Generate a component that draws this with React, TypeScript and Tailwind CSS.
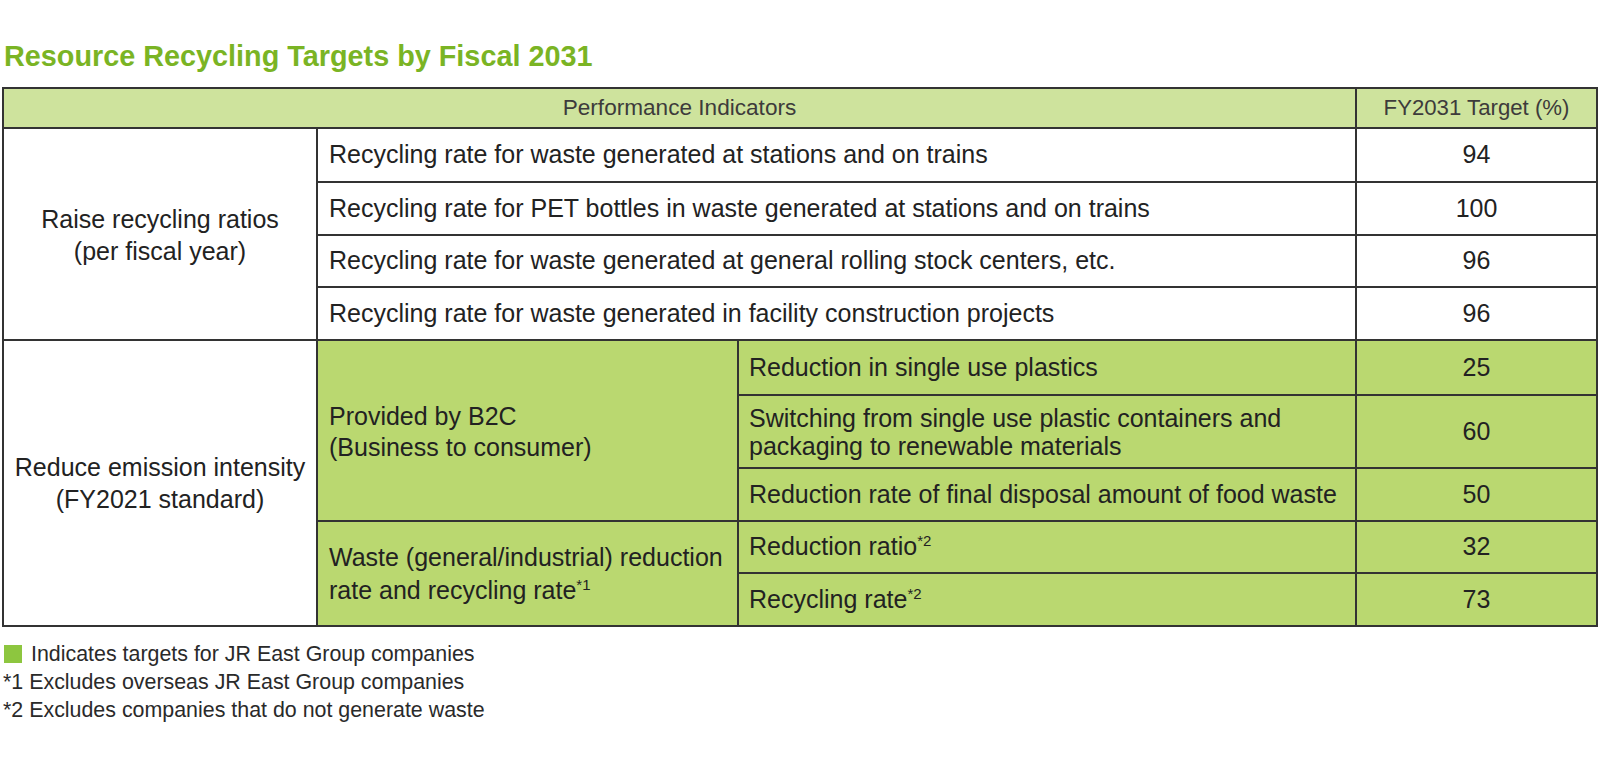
import React from "react";

const font = { fontFamily: '"Liberation Sans", Arial, Helvetica, sans-serif' };

function Sup({ children }: { children: React.ReactNode }) {
  return <span className="text-[15px] leading-none align-[9px]">{children}</span>;
}

export default function App() {
  return (
    <div className="w-[1600px] h-[766px] bg-white text-[#222]" style={font}>
      <div className="pt-[39px] pl-[4px]">
        <h1 className="text-[28.8px] leading-[34px] font-bold text-[#7ab424]">
          Resource Recycling Targets by Fiscal 2031
        </h1>
      </div>
      <div className="mt-[14px] ml-[2px] w-[1596px] bg-[#333] p-[2px] grid gap-[2px] grid-cols-[312px_419px_616px_239px] grid-rows-[38px_52px_51px_50px_51px_53px_71px_51px_50px_51px] text-[25px]">
        {/* header */}
        <div className="col-start-1 col-span-3 row-start-1 bg-[#cee39d] flex items-center justify-center text-[22.6px] text-[#3d3b3b]">
          Performance Indicators
        </div>
        <div className="col-start-4 row-start-1 bg-[#cee39d] flex items-center justify-center text-[22.2px] text-[#3d3b3b]">
          FY2031 Target (%)
        </div>

        {/* raise recycling ratios */}
        <div className="col-start-1 row-start-2 row-span-4 bg-white flex items-center justify-center text-center leading-[32px] pt-[2px]">
          <div>
            Raise recycling ratios
            <br />
            (per fiscal year)
          </div>
        </div>
        <div className="col-start-2 col-span-2 row-start-2 bg-white flex items-center pl-[11px] whitespace-nowrap">
          Recycling rate for waste generated at stations and on trains
        </div>
        <div className="col-start-4 row-start-2 bg-white flex items-center justify-center">94</div>
        <div className="col-start-2 col-span-2 row-start-3 bg-white flex items-center pl-[11px] whitespace-nowrap">
          Recycling rate for PET bottles in waste generated at stations and on trains
        </div>
        <div className="col-start-4 row-start-3 bg-white flex items-center justify-center">100</div>
        <div className="col-start-2 col-span-2 row-start-4 bg-white flex items-center pl-[11px] whitespace-nowrap">
          Recycling rate for waste generated at general rolling stock centers, etc.
        </div>
        <div className="col-start-4 row-start-4 bg-white flex items-center justify-center">96</div>
        <div className="col-start-2 col-span-2 row-start-5 bg-white flex items-center pl-[11px] whitespace-nowrap">
          Recycling rate for waste generated in facility construction projects
        </div>
        <div className="col-start-4 row-start-5 bg-white flex items-center justify-center">96</div>

        {/* reduce emission intensity */}
        <div className="col-start-1 row-start-6 row-span-5 bg-white flex items-center justify-center text-center leading-[32px]">
          <div>
            Reduce emission intensity
            <br />
            (FY2021 standard)
          </div>
        </div>
        <div className="col-start-2 row-start-6 row-span-3 bg-[#bad870] flex items-center pl-[11px] leading-[31px] pt-[2px]">
          <div>
            Provided by B2C
            <br />
            (Business to consumer)
          </div>
        </div>
        <div className="col-start-3 row-start-6 bg-[#bad870] flex items-center pl-[10px] whitespace-nowrap">
          Reduction in single use plastics
        </div>
        <div className="col-start-4 row-start-6 bg-[#bad870] flex items-center justify-center">25</div>
        <div className="col-start-3 row-start-7 bg-[#bad870] flex items-center pl-[10px] leading-[28px] whitespace-nowrap">
          <div>
            Switching from single use plastic containers and
            <br />
            packaging to renewable materials
          </div>
        </div>
        <div className="col-start-4 row-start-7 bg-[#bad870] flex items-center justify-center">60</div>
        <div className="col-start-3 row-start-8 bg-[#bad870] flex items-center pl-[10px] whitespace-nowrap">
          Reduction rate of final disposal amount of food waste
        </div>
        <div className="col-start-4 row-start-8 bg-[#bad870] flex items-center justify-center">50</div>

        <div className="col-start-2 row-start-9 row-span-2 bg-[#bad870] flex items-center pl-[11px] leading-[33px] whitespace-nowrap">
          <div>
            Waste (general/industrial) reduction
            <br />
            rate and recycling rate<Sup>*1</Sup>
          </div>
        </div>
        <div className="col-start-3 row-start-9 bg-[#bad870] flex items-center pl-[10px] whitespace-nowrap">
          <span>
            Reduction ratio<Sup>*2</Sup>
          </span>
        </div>
        <div className="col-start-4 row-start-9 bg-[#bad870] flex items-center justify-center">32</div>
        <div className="col-start-3 row-start-10 bg-[#bad870] flex items-center pl-[10px] whitespace-nowrap">
          <span>
            Recycling rate<Sup>*2</Sup>
          </span>
        </div>
        <div className="col-start-4 row-start-10 bg-[#bad870] flex items-center justify-center">73</div>
      </div>

      {/* footnotes */}
      <div className="mt-[13px] pl-[3px] text-[21.4px] leading-[28px] text-[#2a2a2a]">
        <div className="flex items-center">
          <span className="inline-block w-[18px] h-[18px] bg-[#8dc63f] ml-[1px] mr-[9px]" />
          Indicates targets for JR East Group companies
        </div>
        <div>*1 Excludes overseas JR East Group companies</div>
        <div>*2 Excludes companies that do not generate waste</div>
      </div>
    </div>
  );
}
